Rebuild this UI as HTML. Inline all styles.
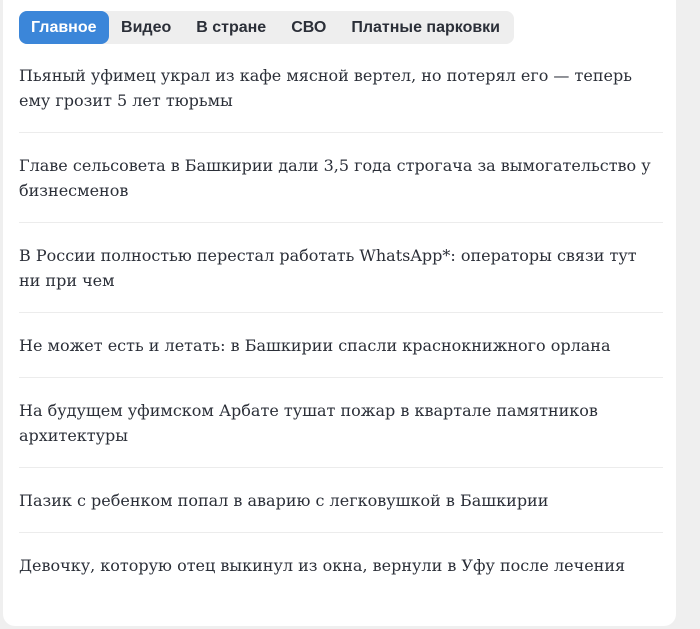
<!DOCTYPE html>
<html><head><meta charset="utf-8"><style>
html,body{margin:0;padding:0;background:#efefef;width:700px;height:629px;overflow:hidden}
.card{position:absolute;left:3px;top:-12px;width:673px;height:638px;background:#fff;border-radius:12px}
.tabs{position:absolute;left:19px;top:11px;height:33px;width:495px;background:#eeeeee;border-radius:8px;display:flex;font-family:"Liberation Sans",sans-serif;font-weight:bold;font-size:16px;color:#2b2f38}
.tab{height:33px;line-height:33px;padding:0 12.5px;border-radius:8px;white-space:nowrap}
.tab.a{background:#3b86d9;color:#fff;padding:0 12px}
.list{position:absolute;left:19px;top:63px;width:644px}
.it{padding:20px 0 19px;border-bottom:1px solid #ececec;font-family:"DejaVu Serif","Liberation Serif",serif;font-size:16px;line-height:25px;color:#2b2f38;white-space:nowrap}
.it:first-child{padding-top:0}
.it:last-child{border-bottom:none}
</style></head><body>
<div class="card"></div>
<div class="tabs"><div class="tab a">Главное</div><div class="tab">Видео</div><div class="tab">В стране</div><div class="tab">СВО</div><div class="tab">Платные парковки</div></div>
<div class="list">
<div class="it">Пьяный уфимец украл из кафе мясной вертел, но потерял его — теперь<br>ему грозит 5 лет тюрьмы</div>
<div class="it">Главе сельсовета в Башкирии дали 3,5 года строгача за вымогательство у<br>бизнесменов</div>
<div class="it">В России полностью перестал работать WhatsApp*: операторы связи тут<br>ни при чем</div>
<div class="it">Не может есть и летать: в Башкирии спасли краснокнижного орлана</div>
<div class="it">На будущем уфимском Арбате тушат пожар в квартале памятников<br>архитектуры</div>
<div class="it">Пазик с ребенком попал в аварию с легковушкой в Башкирии</div>
<div class="it">Девочку, которую отец выкинул из окна, вернули в Уфу после лечения</div>
</div>
</body></html>
